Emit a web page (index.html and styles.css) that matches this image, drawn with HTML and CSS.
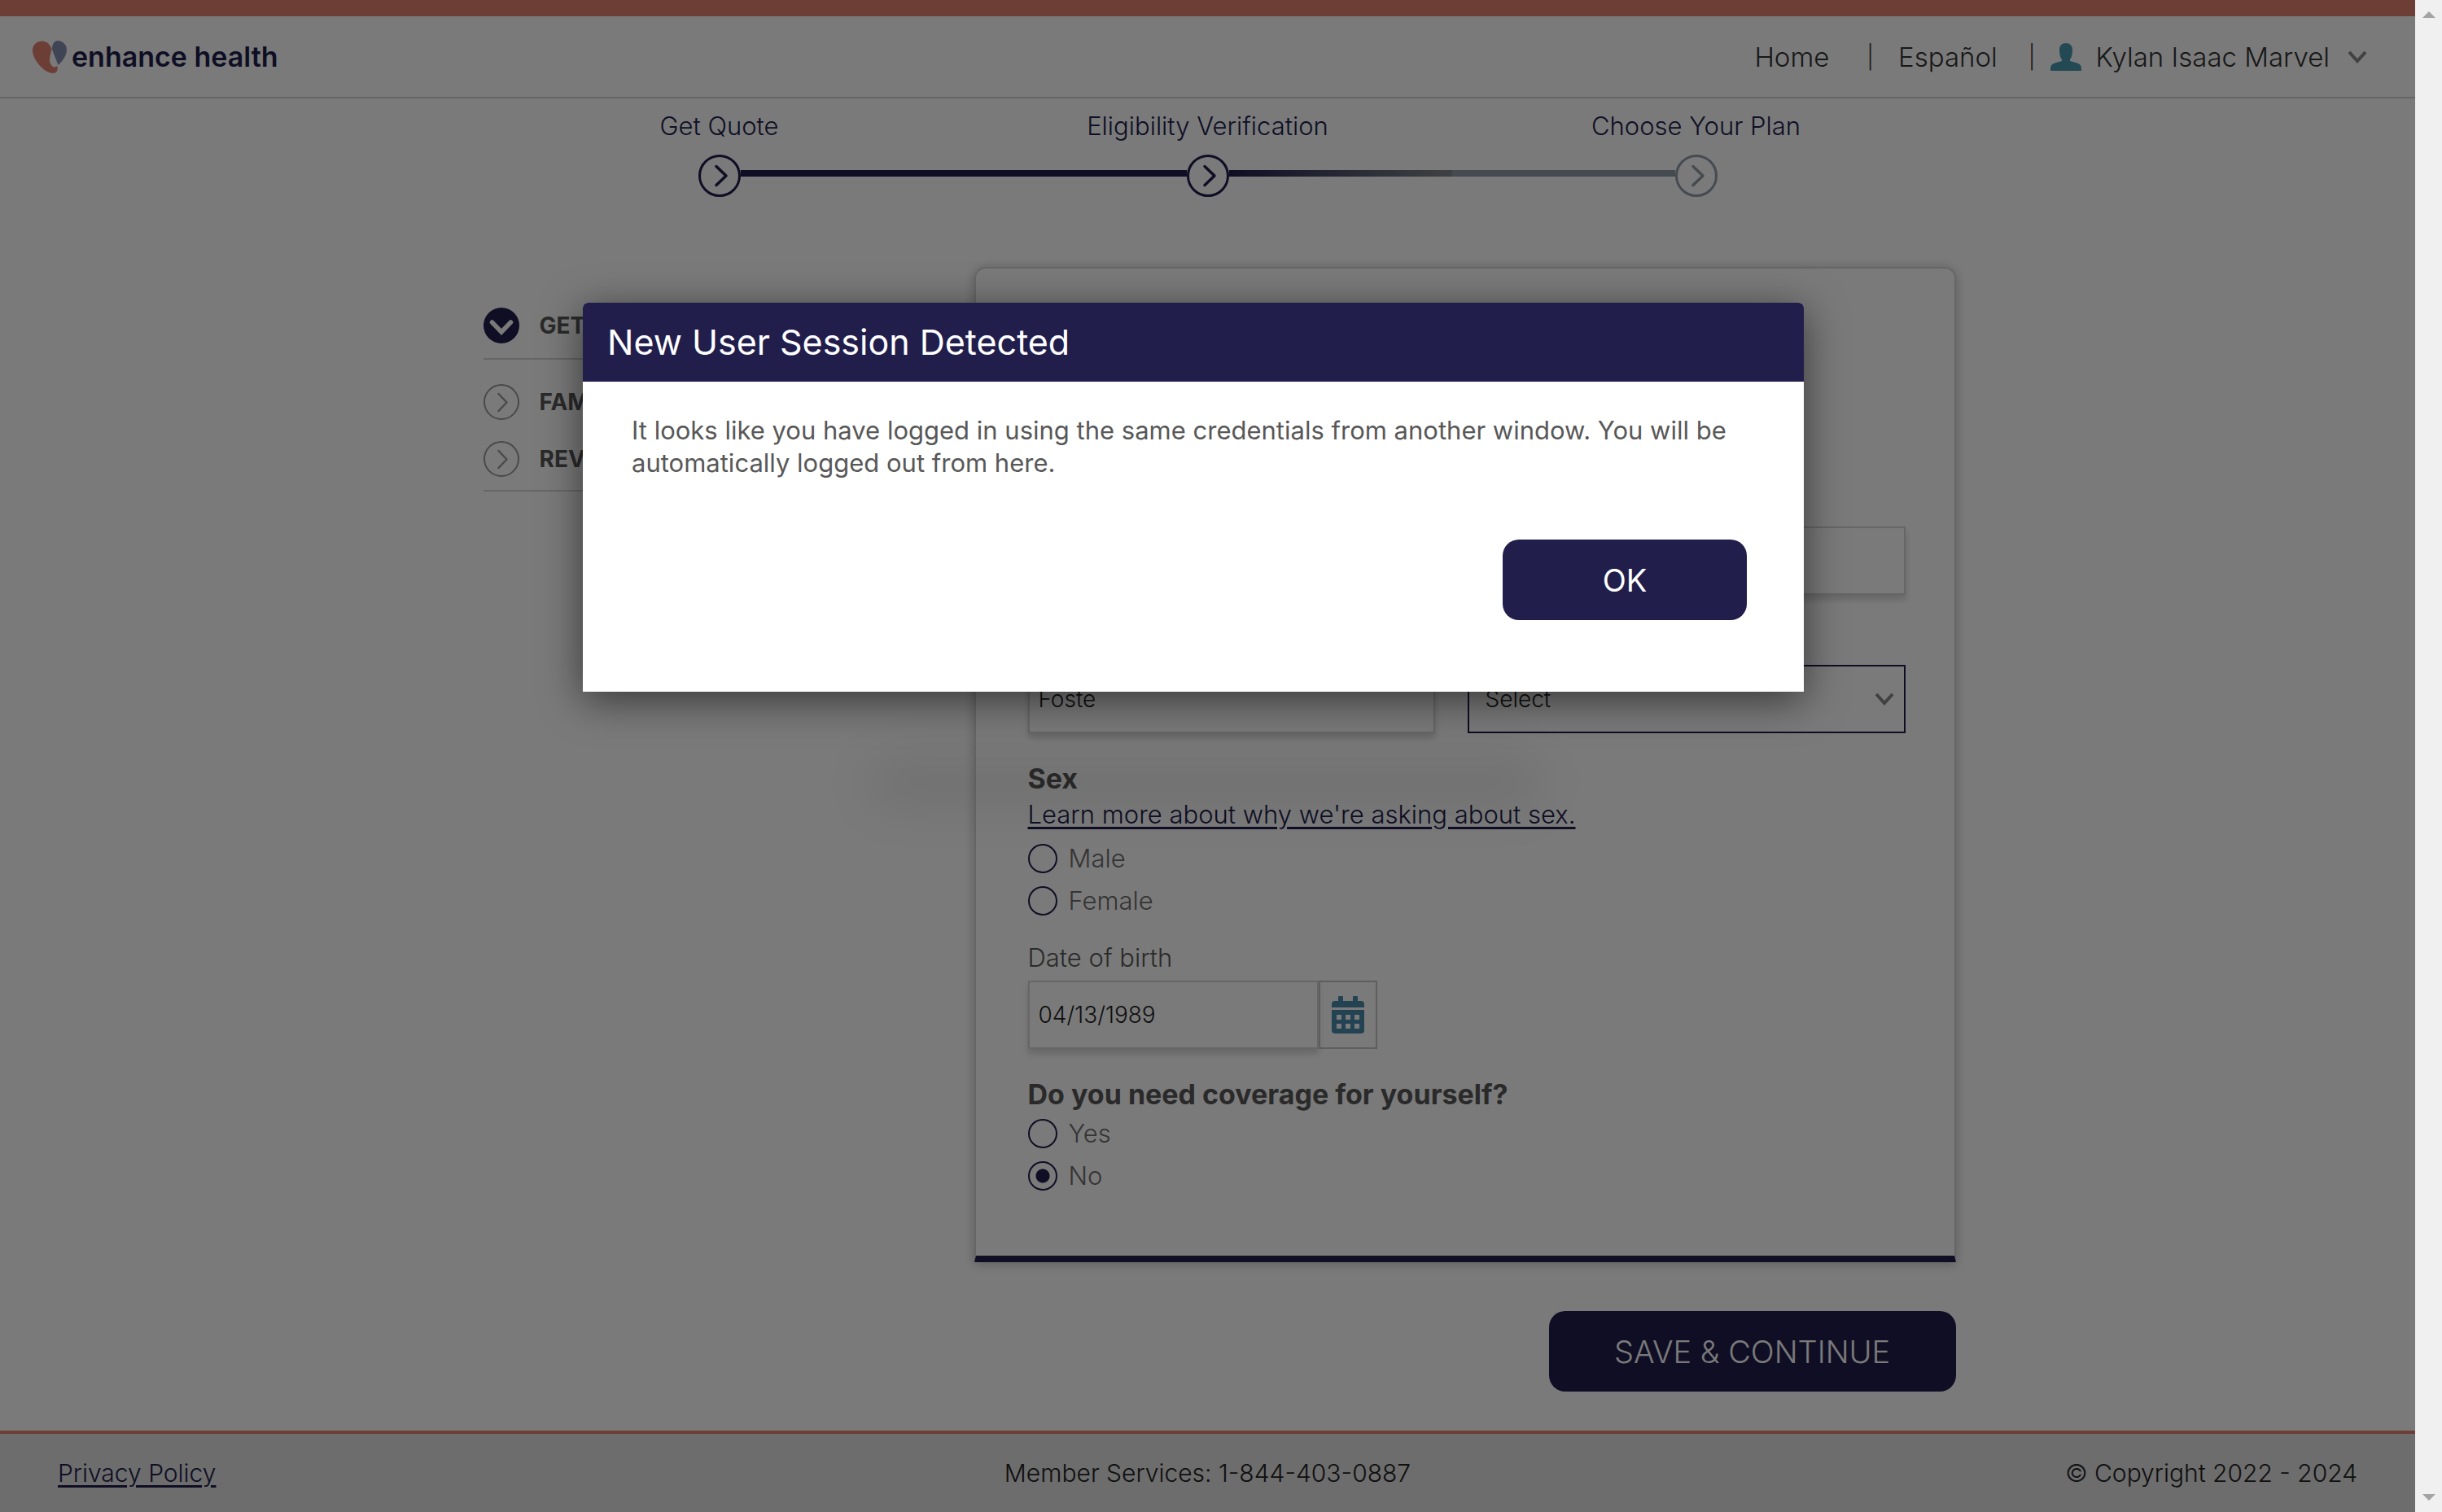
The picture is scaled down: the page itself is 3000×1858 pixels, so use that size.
FILE: index.html
```html
<!DOCTYPE html>
<html lang="en">
<head>
<meta charset="utf-8">
<meta name="viewport" content="width=device-width, initial-scale=1">
<title>Enhance Health - Eligibility Verification</title>
<link rel="stylesheet" href="styles.css">
</head>
<body>
<svg width="0" height="0" class="sprite" aria-hidden="true">
  <symbol id="chevron" viewBox="0 0 24 16"><path d="M2 2l10 11L22 2" fill="none" stroke="currentColor" stroke-width="4"/></symbol>
  <symbol id="ring-arrow" viewBox="0 0 52 52"><circle cx="26" cy="26" r="24.5" fill="none" stroke="currentColor" stroke-width="3"/><path d="M22 14.500l12 11.500-12 11.500" fill="none" stroke="currentColor" stroke-width="3.500" stroke-linecap="round" stroke-linejoin="round"/></symbol>
  <symbol id="ring-thin" viewBox="0 0 44 44"><circle cx="22" cy="22" r="21" fill="none" stroke="currentColor" stroke-width="2"/><path d="M18.500 12l10 10.500-10 10.500" fill="none" stroke="currentColor" stroke-width="2.500" stroke-linecap="round" stroke-linejoin="round"/></symbol>
</svg>
<div class="page">
  <header class="header">
    <a class="logo" href="#">
      <svg class="logo-mark" viewBox="0 0 42 40" aria-hidden="true">
        <path d="M12 .5C5 .5 0 5 0 12c0 12 15 28 25 28 5 0 7-5 5-9-2 2-5 2-7-1-4-6-1-12 .5-20C21 4 17 .5 12 .5z" fill="#e38371"/>
        <path d="M31 0c-4.500 0-7 5-7 10.500 2 6 5 13 7.500 19.500C37 25 42 18 42 11 42 4 36 0 31 0z" fill="#8790b5"/>
      </svg>
      <span>enhance health</span>
    </a>
    <nav class="nav">
      <a href="#">Home</a>
      <span class="divider">|</span>
      <a href="#">Español</a>
      <span class="divider">|</span>
      <button class="account" type="button">
        <svg class="person" viewBox="0 0 38 34" aria-hidden="true"><path d="M19 0c5 0 8 3 8 8 0 5-1 10-3 12v2c8 2 14 3 14 9v3H0v-3c0-6 6-7 14-9v-2c-2-2-3-7-3-12 0-5 3-8 8-8z" fill="#4a9bb0"/></svg>
        <span>Kylan Isaac Marvel</span>
        <svg class="chevron" aria-hidden="true"><use href="#chevron"/></svg>
      </button>
    </nav>
  </header>

  <main class="main">
    <ol class="steps">
      <li class="step step-first"><span>Get Quote</span><div class="track"><i class="line"></i><svg class="ring"><use href="#ring-arrow"/></svg><i class="line"></i></div></li>
      <li class="step step-current"><span>Eligibility Verification</span><div class="track"><i class="line"></i><svg class="ring"><use href="#ring-arrow"/></svg><i class="line"></i></div></li>
      <li class="step step-next"><span>Choose Your Plan</span><div class="track"><i class="line"></i><svg class="ring"><use href="#ring-arrow"/></svg><i class="line"></i></div></li>
    </ol>

    <div class="content">
      <aside class="sections">
        <a class="section section-open" href="#"><svg class="section-icon" viewBox="0 0 44 44"><circle cx="22" cy="22" r="22" fill="#211e4c"/><path d="M10.500 18L22 30l11.500-12" fill="none" stroke="#fff" stroke-width="5.500" stroke-linecap="round"/></svg>GET</a>
        <div class="section-group">
          <a class="section" href="#"><svg class="section-icon"><use href="#ring-thin"/></svg>FAMILY</a>
          <a class="section" href="#"><svg class="section-icon"><use href="#ring-thin"/></svg>REVIEW</a>
        </div>
      </aside>

      <form class="form">
        <div class="card">
          <div class="fields">
            <div class="field"><label for="first">First name</label><input class="control" id="first" type="text"></div>
            <div class="field"><label for="middle">Middle name</label><input class="control" id="middle" type="text"></div>
            <div class="field"><label for="last">Last name</label><input class="control" id="last" type="text" value="Foste"></div>
            <div class="field"><label for="suffix">Suffix</label>
              <div class="select"><select class="control control-active" id="suffix"><option>Select</option></select><svg class="chevron" aria-hidden="true"><use href="#chevron"/></svg></div>
            </div>
          </div>

          <fieldset class="group">
            <legend>Sex</legend>
            <a class="learn" href="#">Learn more about why we're asking about sex.</a>
            <div class="choices">
              <label class="choice"><input type="radio" name="sex">Male</label>
              <label class="choice"><input type="radio" name="sex">Female</label>
            </div>
          </fieldset>

          <div class="field field-date">
            <label for="dob">Date of birth</label>
            <div class="date"><input class="control" id="dob" type="text" value="04/13/1989"><button class="calendar" type="button" aria-label="Choose date">
              <svg viewBox="0 0 40 46" aria-hidden="true"><path fill="#4a8aac" fill-rule="evenodd" d="M9 0h4q1 0 1 1v5h12V1q0-1 1-1h4q1 0 1 1v5h4q4 0 4 4v4H0v-4q0-4 4-4h4V1q0-1 1-1zM0 17h40v25q0 4-4 4H4q-4 0-4-4zM6 23v6h6v-6zM17 23v6h6v-6zM28 23v6h6v-6zM6 34v6h6v-6zM17 34v6h6v-6zM28 34v6h6v-6z"/></svg>
            </button></div>
          </div>

          <fieldset class="group">
            <legend>Do you need coverage for yourself?</legend>
            <div class="choices choices-tight">
              <label class="choice"><input type="radio" name="coverage">Yes</label>
              <label class="choice"><input type="radio" name="coverage" checked>No</label>
            </div>
          </fieldset>
        </div>
        <button class="button button-wide" type="button">SAVE &amp; CONTINUE</button>
      </form>
    </div>
  </main>

  <footer class="footer">
    <a href="#">Privacy Policy</a>
    <span>Member Services: 1-844-403-0887</span>
    <span>© Copyright 2022 - 2024</span>
  </footer>

  <div class="overlay">
    <div class="dialog-area">
      <section class="dialog" role="dialog" aria-modal="true" aria-labelledby="dialog-title">
        <h1 class="dialog-title" id="dialog-title">New User Session Detected</h1>
        <div class="dialog-body">
          <p>It looks like you have logged in using the same credentials from another window. You will be automatically logged out from here.</p>
          <button class="button" type="button">OK</button>
        </div>
      </section>
      <div class="toast-shadow"></div>
    </div>
  </div>
</div>
<div class="scrollbar" aria-hidden="true">
  <svg viewBox="0 0 16 8"><path d="M0 8L8 0l8 8z" fill="#a3a3a3"/></svg>
  <svg viewBox="0 0 16 8"><path d="M0 0h16L8 8z" fill="#a3a3a3"/></svg>
</div>
</body>
</html>
```

FILE: styles.css
```css
:root {
  --navy: #211e4c;
  --coral: #e38371;
  --line: #d6d6d6;
}

* { box-sizing: border-box; }

body {
  margin: 0;
  display: grid;
  grid-template-columns: minmax(0, 1fr) 33px;
  min-height: 100vh;
  font: 400 31px/40px Inter, "Open Sans", sans-serif;
  color: #585858;
  background: #fff;
}

h1, p, ol, fieldset, legend { margin: 0; padding: 0; border: 0; }
button, input, select { font: inherit; color: inherit; margin: 0; }
.sprite { position: absolute; }
svg { display: block; flex: none; }

.page {
  position: relative;
  display: flex;
  flex-direction: column;
  border-top: 20px solid var(--coral);
}

/* Header */
.header {
  display: flex;
  justify-content: space-between;
  align-items: center;
  height: 101px;
  padding: 0 59px 0 40px;
  border-bottom: 2px solid var(--line);
}
.logo {
  display: flex;
  align-items: center;
  gap: 6px;
  color: var(--navy);
  font-size: 34px;
  font-weight: 600;
  text-decoration: none;
}
.logo-mark { width: 42px; height: 40px; }
.nav { display: flex; align-items: center; font-size: 33px; font-weight: 300; color: #333; }
.nav a { color: inherit; text-decoration: none; }
.divider { padding: 0 30px 0 46px; font-size: 28px; }
.divider:nth-of-type(2) { padding: 0 18px 0 38px; }
.account {
  display: flex;
  align-items: center;
  padding: 0;
  border: 0;
  background: none;
}
.person { width: 38px; height: 34px; margin-right: 18px; }
.chevron { width: 24px; height: 16px; color: #888; }
.account .chevron { margin-left: 22px; }

/* Progress steps */
.main { flex: 1; padding-top: 14px; }
.steps {
  display: grid;
  grid-template-columns: repeat(3, 1fr);
  max-width: 1800px;
  margin: 0 auto;
  list-style: none;
  color: var(--navy);
  text-align: center;
  font-weight: 300;
}
.track { display: flex; margin-top: 15px; color: var(--navy); }
.ring { width: 52px; height: 52px; }
.line { flex: 1; height: 8px; margin-top: 19px; background: currentColor; }
.step-first .line:first-child, .step-next .line:last-child { visibility: hidden; }
.step-current .line:last-child { background: linear-gradient(90deg, var(--navy), #848a8e); }
.step-next .track { color: #939da9; }

/* Page content */
.content {
  display: grid;
  grid-template-columns: 1fr 1206px;
  gap: 66px;
  max-width: 1838px;
  margin: 86px auto 0;
  padding-left: 29px;
}
.sections { padding-top: 50px; }
.section {
  display: flex;
  align-items: center;
  gap: 25px;
  color: inherit;
  font-weight: 700;
  font-size: 28px;
  line-height: 44px;
  text-decoration: none;
}
.section-icon { width: 44px; height: 44px; color: #9a9a9a; }
.section-open { padding-bottom: 18px; border-bottom: 2px solid var(--line); }
.section-group {
  display: grid;
  gap: 26px;
  padding: 30px 0 16px;
  border-bottom: 2px solid var(--line);
}

.form { display: flex; flex-direction: column; }
.card {
  padding: 269px 60px 80px 64px;
  border: 2px solid var(--line);
  border-bottom: 8px solid var(--navy);
  border-radius: 14px 14px 0 0;
  box-shadow: 0 2px 14px rgba(0, 0, 0, .25);
}
.fields { display: grid; grid-template-columns: 500px 1fr; gap: 38px 40px; }
.field label { display: block; margin-bottom: 8px; font-weight: 300; }
.control {
  display: block;
  width: 100%;
  height: 84px;
  padding: 0 11px;
  border: 2px solid var(--line);
  border-radius: 0;
  background: transparent;
  box-shadow: 0 6px 8px rgba(0, 0, 0, .16);
  color: #222;
  font-size: 28px;
  font-weight: 300;
}
.control-active {
  appearance: none;
  padding: 0 20px;
  border-color: var(--navy);
  box-shadow: none;
}
.select { display: grid; align-items: center; }
.select > * { grid-area: 1 / 1; }
.select .chevron { justify-self: end; margin-right: 14px; pointer-events: none; }

.group { margin-top: 36px; }
.group legend { font-size: 34px; font-weight: 700; }
.learn { display: block; margin-top: 4px; color: var(--navy); font-weight: 300; text-underline-offset: 4px; }
.choices { display: grid; gap: 16px; margin-top: 16px; }
.choices-tight { margin-top: 10px; }
.choice {
  display: flex;
  align-items: center;
  gap: 14px;
  line-height: 36px;
  font-weight: 300;
  color: #6e6e6e;
}
.choice input {
  appearance: none;
  width: 36px;
  height: 36px;
  border: 2px solid var(--navy);
  border-radius: 50%;
}
.choice input:checked { background: radial-gradient(circle, var(--navy) 8px, transparent 9px); }
.field-date { margin-top: 32px; }
.date { display: flex; }
.date .control { width: 357px; }
.calendar {
  display: grid;
  place-items: center;
  width: 72px;
  padding: 0;
  border: 2px solid #c4c4c4;
  background: none;
}
.calendar svg { width: 40px; height: 46px; }

.button {
  align-self: flex-end;
  width: 300px;
  height: 99px;
  border: 0;
  border-radius: 20px;
  background: var(--navy);
  color: #fff;
  font-size: 38px;
}
.button-wide { width: 500px; margin: 60px 0 48px; font-weight: 300; }

/* Footer */
.footer {
  display: grid;
  grid-template-columns: 1fr auto 1fr;
  align-items: center;
  height: 100px;
  padding: 0 71px;
  border-top: 4px solid var(--coral);
  background: #e3e3e3;
  color: #222;
  font-size: 30px;
  font-weight: 300;
}
.footer a { justify-self: start; color: var(--navy); text-underline-offset: 4px; }
.footer span:last-child { justify-self: end; }

/* Session dialog */
.overlay {
  position: absolute;
  inset: -20px 0 0;
  padding: 372px 35px 0 0;
  background: rgba(0, 0, 0, .52);
}
.dialog-area { position: relative; max-width: 1500px; margin: 0 auto; }
.dialog {
  position: relative;
  z-index: 1;
  border-radius: 6px 6px 0 0;
  background: #fff;
  box-shadow: 0 10px 50px rgba(0, 0, 0, .55);
}
.dialog-title {
  padding: 0 30px;
  border-radius: 6px 6px 0 0;
  background: var(--navy);
  color: #fff;
  font-size: 43px;
  font-weight: 400;
  line-height: 97px;
}
.dialog-body {
  display: flex;
  flex-direction: column;
  gap: 74px;
  padding: 40px 70px 88px 60px;
}
.toast-shadow {
  position: absolute;
  top: 560px;
  left: 350px;
  right: 320px;
  height: 60px;
  border-radius: 30px;
  background: rgba(0, 0, 0, .07);
  filter: blur(28px);
}

.scrollbar {
  display: flex;
  flex-direction: column;
  justify-content: space-between;
  align-items: center;
  padding: 14px 0;
  background: #f0f0f0;
}
.scrollbar svg { width: 16px; height: 8px; }
```
